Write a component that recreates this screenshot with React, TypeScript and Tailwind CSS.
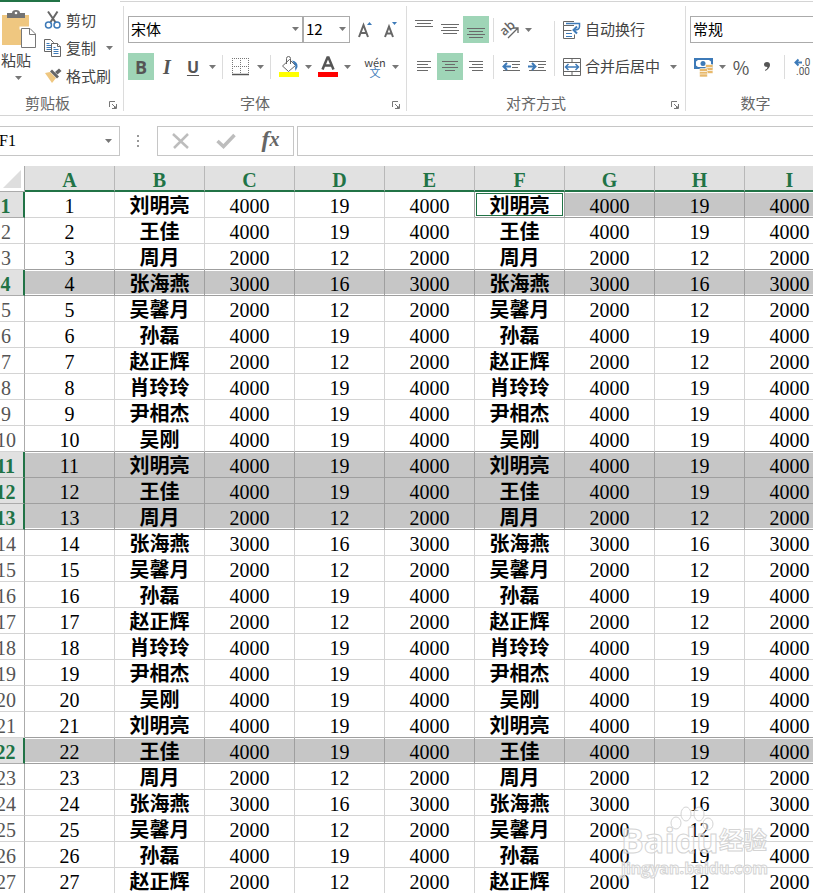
import type { ReactNode } from 'react'
import clsx from 'clsx'

const names = ['刘明亮', '王佳', '周月', '张海燕', '吴馨月', '孙磊', '赵正辉', '肖玲玲', '尹相杰', '吴刚']
const salaries = [4000, 4000, 2000, 3000, 2000, 4000, 2000, 4000, 4000, 4000]
const days = [19, 19, 12, 16, 12, 19, 12, 19, 19, 19]
const columns = ['A', 'B', 'C', 'D', 'E', 'F', 'G', 'H', 'I']
const selectedRows = [4, 11, 12, 13, 22]

const rows = Array.from({ length: 27 }, (_, i) => {
  const k = i % names.length
  return [i + 1, names[k], salaries[k], days[k], salaries[k], names[k], salaries[k], days[k], salaries[k]]
})

function isSelected(row: number, col: number) {
  return selectedRows.includes(row) || (row === 1 && col >= 5)
}

function Arrow() {
  return (
    <svg width="7" height="4" viewBox="0 0 7 4" fill="#777">
      <path d="M0 0h7L3.5 4z" />
    </svg>
  )
}

function Caret({ label }: { label: string }) {
  return (
    <button aria-label={label} className="flex h-full w-3 shrink-0 items-center justify-center">
      <Arrow />
    </button>
  )
}

function Sep() {
  return <div className="mx-1 h-6 w-px shrink-0 bg-[#dcdcdc]" />
}

function Tool({ label, active, className, children }: { label: string; active?: boolean; className: string; children: ReactNode }) {
  return (
    <button aria-label={label} className={clsx('flex h-full shrink-0 items-center justify-center', active && 'bg-[#9fd5b7]', className)}>
      {children}
    </button>
  )
}

// each line is [x, y, width] inside a 26px button
function Lines({ lines }: { lines: number[][] }) {
  return (
    <svg width="26" height="27" viewBox="0 0 26 27" fill="#6a6a6a">
      {lines.map(([x, y, w]) => (
        <rect key={y} x={x} y={y} width={w} height="1" />
      ))}
    </svg>
  )
}

function Launcher({ label }: { label: string }) {
  return (
    <button aria-label={label} className="absolute right-1.5 bottom-0.5">
      <svg width="8" height="8" viewBox="0 0 8 8" fill="none" stroke="#777">
        <path d="M.5 6V.5H6M3 3l3 3" />
        <path d="M7.5 3v4.5H3M5 6.5h2V5" />
      </svg>
    </button>
  )
}

function Group({ title, className, launcher = true, children }: { title: string; className: string; launcher?: boolean; children: ReactNode }) {
  return (
    <section aria-label={title} className={clsx('relative flex h-[105px] shrink-0 flex-col justify-between border-r border-[#dcdcdc]', className)}>
      {children}
      <div className="pr-5 text-center leading-4 text-[#666]">{title}</div>
      {launcher && <Launcher label={title + '设置'} />}
    </section>
  )
}

function Combo({ label, value, className, arrow = true }: { label: string; value: string; className: string; arrow?: boolean }) {
  return (
    <div className={clsx('relative h-[27px] shrink-0', className)}>
      <select aria-label={label} className="h-full w-full appearance-none border border-[#ababab] bg-white px-0.5 text-black">
        <option>{value}</option>
      </select>
      {arrow && (
        <span className="pointer-events-none absolute top-[11px] right-1">
          <Arrow />
        </span>
      )}
    </div>
  )
}

function ClipboardGroup() {
  return (
    <Group title="剪贴板" className="w-[124px] pr-2">
      <div className="flex gap-2 whitespace-nowrap">
        <button className="flex w-9 shrink-0 flex-col items-center pt-1">
          <svg width="36" height="38" viewBox="0 0 36 38">
            <path d="M2 5h27v30H2z" fill="#efc780" />
            <path d="M7 8V3h5q0-3 4-3t4 3h5v5z" fill="#737373" />
            <circle cx="16" cy="3" r="1.3" fill="#fff" />
            <path d="M19.500 16.500h12v3h-12z" fill="#fff" />
            <path d="M21.500 18.500h8.500l5.500 5.500v13.500h-14z" fill="#fff" stroke="#777" />
            <path d="M29.500 18.500v6h6" fill="none" stroke="#777" />
          </svg>
          <span className="-ml-1 leading-6">粘贴</span>
          <span className="pt-1">
            <Arrow />
          </span>
        </button>
        <div className="flex flex-col">
          <button className="flex h-7 items-center gap-1">
            <svg width="18" height="20" viewBox="0 0 18 20" fill="none">
              <path d="M4 1.500 12 13M13.500 1.500 6 13" stroke="#666" strokeWidth="2" />
              <circle cx="4.500" cy="15" r="3" stroke="#3d7ab8" strokeWidth="1.500" />
              <circle cx="13" cy="15" r="3" stroke="#3d7ab8" strokeWidth="1.500" />
            </svg>
            剪切
          </button>
          <div className="flex h-7 items-center">
            <button className="flex items-center gap-1">
              <svg width="18" height="18" viewBox="0 0 18 18" fill="#fff" stroke="#666">
                <path d="M.5.5h6l3 3v9h-9z" />
                <path d="M2.500 4.500h3M2.500 6.500h5M2.500 8.500h5M2.500 10.500h5" stroke="#3d7ab8" />
                <path d="M7.500 4.500h6l3 3v10h-9z" />
                <path d="M13.500 4.500v3h3" />
                <path d="M9.500 8.500h2M9.500 10.500h5M9.500 12.500h5M9.500 14.500h5" stroke="#3d7ab8" />
              </svg>
              复制
            </button>
            <span className="ml-[7px] flex h-6">
              <Caret label="复制选项" />
            </span>
          </div>
          <button className="flex h-7 items-center gap-1">
            <svg width="18" height="16" viewBox="0 0 18 16">
              <path d="m1 5 5-1 6 6-4 5z" fill="#efc780" />
              <path d="m6 3.500 2-2 7 7-2 2z" fill="#666" />
              <path d="m11 4 4-3.500 2.500 2.500-4 3.500z" fill="#666" />
            </svg>
            格式刷
          </button>
        </div>
      </div>
    </Group>
  )
}

function FontGroup() {
  return (
    <Group title="字体" className="w-[283px] px-1 pt-2.5">
      <div className="flex flex-col gap-2.5">
        <div className="flex h-[27px]">
          <Combo label="字体名称" value="宋体" className="w-[175px]" />
          <Combo label="字号" value="12" className="w-[47px]" />
          <Tool label="增大字号" className="ml-0.5 w-[26px]">
            <svg width="16" height="18" viewBox="0 0 16 18">
              <path d="m2 16 4.500-12L11 16M3.500 12h6" fill="none" stroke="#666" strokeWidth="2" />
              <path d="m10 4 2.500-3L15 4z" fill="#3d7ab8" />
            </svg>
          </Tool>
          <Tool label="减小字号" className="w-[26px]">
            <svg width="16" height="18" viewBox="0 0 16 18">
              <path d="m2 16 4-10.500 4 10.500M3.500 12.500h5" fill="none" stroke="#666" strokeWidth="2" />
              <path d="m9 1 2.500 3L14 1z" fill="#3d7ab8" />
            </svg>
          </Tool>
        </div>
        <div className="flex h-[27px] items-center">
          <Tool label="加粗" active className="w-[26px] font-['Open_Sans',sans-serif] text-lg font-bold text-[#555]">B</Tool>
          <Tool label="倾斜" className="w-[26px] font-['Liberation_Serif',serif] text-xl font-bold text-[#555] italic">I</Tool>
          <Tool label="下划线" className="w-[26px] font-['Open_Sans',sans-serif] text-base font-bold text-[#555] underline underline-offset-2">U</Tool>
          <Caret label="下划线选项" />
          <Sep />
          <Tool label="边框" className="w-[27px]">
            <svg width="17" height="18" viewBox="0 0 17 18" fill="none" stroke="#777">
              <path d="M0 .5h17M.5 0v17M8.500 0v17M16.500 0v17M0 8.500h17" strokeDasharray="1 1" />
              <path d="M0 16.500h17" stroke="#555" strokeWidth="1.500" />
            </svg>
          </Tool>
          <Caret label="边框选项" />
          <Sep />
          <Tool label="填充颜色" className="w-[27px]">
            <svg width="20" height="21" viewBox="0 0 20 21">
              <path d="m3.500 10 7-6.500 6 6-7 6z" fill="#fff" stroke="#666" />
              <path d="M7.500 8V2.500q0-2 2-2t2 2V8" fill="none" stroke="#666" />
              <path d="M13 4.500q6 1 5.500 6.500l-2 4q-1-3 0-5z" fill="#3d7ab8" />
              <path d="M0 16h20v5H0z" fill="#ff0" />
            </svg>
          </Tool>
          <Caret label="填充颜色选项" />
          <Tool label="字体颜色" className="w-[27px]">
            <svg width="20" height="21" viewBox="0 0 20 21">
              <path d="m4.500 13.500 5-12h1l5 12M6.500 9.500h7" fill="none" stroke="#555" strokeWidth="2.500" />
              <path d="M0 16h20v5H0z" fill="red" />
            </svg>
          </Tool>
          <Caret label="字体颜色选项" />
          <button aria-label="拼音" className="ml-2 flex w-7 flex-col items-center text-[11px] leading-[10px]">
            <span>wén</span>
            <span className="text-[#3d7ab8]">文</span>
          </button>
          <Caret label="拼音选项" />
        </div>
      </div>
    </Group>
  )
}

function AlignGroup() {
  return (
    <Group title="对齐方式" className="w-[279px] px-1 pt-2.5">
      <div className="flex items-center">
        <div className="flex flex-col gap-2.5">
          <div className="flex h-[27px] items-center">
            <Tool label="顶端对齐" className="w-[26px]">
              <Lines lines={[[4, 4, 18], [6, 7, 14], [4, 10, 18]]} />
            </Tool>
            <Tool label="垂直居中" className="w-[26px]">
              <Lines lines={[[4, 8, 18], [6, 11, 14], [4, 14, 18], [6, 17, 14]]} />
            </Tool>
            <Tool label="底端对齐" active className="w-[26px]">
              <Lines lines={[[4, 12, 18], [6, 15, 14], [4, 18, 18], [6, 21, 14]]} />
            </Tool>
            <Sep />
            <Tool label="方向" className="w-6">
              <svg width="20" height="18" viewBox="0 0 20 18">
                <text x="1" y="13" fontSize="13" fontFamily="Open Sans" fontWeight="600" fill="#666" transform="rotate(-42 6 10)">ab</text>
                <path d="m8 17 9.500-9.500M13 7h5v5" fill="none" stroke="#666" strokeWidth="1.300" />
              </svg>
            </Tool>
            <Caret label="方向选项" />
          </div>
          <div className="flex h-[27px] items-center">
            <Tool label="左对齐" className="w-[26px]">
              <Lines lines={[[6, 8, 14], [6, 11, 11], [6, 14, 14], [6, 17, 11]]} />
            </Tool>
            <Tool label="居中" active className="w-[26px]">
              <Lines lines={[[5, 8, 16], [8, 11, 10], [5, 14, 16], [8, 17, 10]]} />
            </Tool>
            <Tool label="右对齐" className="w-[26px]">
              <Lines lines={[[6, 8, 14], [9, 11, 11], [6, 14, 14], [9, 17, 11]]} />
            </Tool>
            <Sep />
            <Tool label="减少缩进量" className="w-[26px]">
              <svg width="18" height="11" viewBox="0 0 18 11">
                <path d="M1 .5h17M10 3.500h8M10 6.500h6M1 9.500h17" stroke="#6a6a6a" />
                <path d="M9 5.500H1.500M5 2 1.500 5.500 5 9" fill="none" stroke="#3d7ab8" strokeWidth="2" />
              </svg>
            </Tool>
            <Tool label="增加缩进量" className="w-[26px]">
              <svg width="18" height="11" viewBox="0 0 18 11">
                <path d="M1 .5h17M10 3.500h8M10 6.500h6M1 9.500h17" stroke="#6a6a6a" />
                <path d="M0 5.500h7.500M4 2l3.500 3.500L4 9" fill="none" stroke="#3d7ab8" strokeWidth="2" />
              </svg>
            </Tool>
          </div>
        </div>
        <div className="mx-1 h-[55px] w-px shrink-0 bg-[#dcdcdc]" />
        <div className="flex flex-col gap-2.5 pl-1 whitespace-nowrap">
          <button className="flex h-[27px] items-center gap-1">
            <svg width="18" height="18" viewBox="0 0 18 18" fill="none">
              <path d="M11 .5H.5v4H11M.5 4.500v13h11v-4M.5 9.500h8" stroke="#666" />
              <path d="M3 2.500h13.500v3q0 3.500-5 3.500" stroke="#3d7ab8" strokeWidth="1.500" />
              <path d="M14 5.500 10.500 9l3.500 3.500" stroke="#3d7ab8" strokeWidth="2" />
              <path d="M3 12.500h6M3 15.500h6" stroke="#3d7ab8" />
            </svg>
            自动换行
          </button>
          <div className="flex h-[27px] items-center">
            <button className="flex items-center gap-1">
              <svg width="18" height="18" viewBox="0 0 18 18" fill="none">
                <path d="M.5.5h17v17H.5zM.5 4.500h17M.5 13.500h17M9 .5v4M9 13.500v4" stroke="#666" />
                <path d="M2.500 9h13M5.500 6l-3 3 3 3M12.500 6l3 3-3 3" stroke="#3d7ab8" strokeWidth="1.500" />
              </svg>
              合并后居中
            </button>
            <span className="ml-[7px] flex h-full">
              <Caret label="合并选项" />
            </span>
          </div>
        </div>
      </div>
    </Group>
  )
}

function NumberGroup() {
  return (
    <Group title="数字" launcher={false} className="w-40 px-1 pt-2.5">
      <div className="flex flex-col gap-2.5">
        <Combo label="数字格式" value="常规" className="w-full" arrow={false} />
        <div className="flex h-[27px] items-center">
          <Tool label="会计数字格式" className="w-[26px]">
            <svg width="19" height="20" viewBox="0 0 19 20">
              <path d="M0 1h19v11H0z" fill="#3d7ab8" />
              <path d="M2 4.500 4 3h11l2 1.500v4L15 10H4L2 8.500z" fill="#fff" />
              <circle cx="9" cy="6.500" r="2.500" fill="#3d7ab8" />
              <g fill="#e8b96c" stroke="#fff" strokeWidth=".6">
                <rect x="11.500" y="7.500" width="7.500" height="3" rx="1" />
                <rect x="11.500" y="10.500" width="7.500" height="3" rx="1" />
                <rect x="11.500" y="13.500" width="7.500" height="3" rx="1" />
                <rect x="5.500" y="11.500" width="8" height="3" rx="1" />
                <rect x="5.500" y="14.500" width="8" height="3" rx="1" />
                <rect x="5.500" y="17" width="8" height="3" rx="1" />
              </g>
            </svg>
          </Tool>
          <Caret label="会计数字格式选项" />
          <Tool label="百分比样式" className="w-[26px] text-lg text-[#555]">%</Tool>
          <Tool label="千位分隔样式" className="w-[26px]">
            <svg width="6" height="9" viewBox="0 0 6 9" fill="#555">
              <path d="M0 2.500Q0 0 3 0t3 3-4.500 6l-.5-1Q3.500 7 3.500 5 0 5 0 2.500z" />
            </svg>
          </Tool>
          <Sep />
          <Tool label="增加小数位数" className="w-[26px]">
            <svg width="17" height="18" viewBox="0 0 17 18" fontFamily="Roboto" fontSize="10" fill="#555">
              <path d="M8 4.500H2M4.500 1.500l-3 3 3 3" fill="none" stroke="#3d7ab8" strokeWidth="2" />
              <text x="8" y="8">.0</text>
              <text x="2" y="17">.00</text>
            </svg>
          </Tool>
        </div>
      </div>
    </Group>
  )
}

function FormulaBar() {
  return (
    <div className="flex h-[50px] items-center">
      <div className="relative w-[120px] shrink-0">
        <input aria-label="名称框" defaultValue="F1" className="-ml-1 h-[30px] w-[124px] border border-[#c6c6c6] px-0.5 font-['Liberation_Serif',serif] text-base text-black" />
        <span className="pointer-events-none absolute top-[13px] right-2">
          <Arrow />
        </span>
      </div>
      <svg width="37" height="12" viewBox="0 0 37 12" fill="#999" className="shrink-0">
        <path d="M17 0h2v2h-2zM17 5h2v2h-2zM17 10h2v2h-2z" />
      </svg>
      <div className="flex h-[30px] w-[137px] shrink-0 items-center border border-[#c6c6c6]">
        <Tool label="取消" className="w-[45px]">
          <svg width="18" height="16" viewBox="0 0 18 16" fill="none" stroke="#bdbdbd" strokeWidth="2.500">
            <path d="m1 1 15 14M16 1 2 15" />
          </svg>
        </Tool>
        <Tool label="输入" className="w-[45px]">
          <svg width="20" height="16" viewBox="0 0 20 16" fill="none" stroke="#bdbdbd" strokeWidth="3.500">
            <path d="m1.500 8 6 5.500L18.500 2" />
          </svg>
        </Tool>
        <Tool label="插入函数" className="w-[45px] pb-1 font-['Liberation_Serif',serif] text-2xl font-bold text-[#666] italic">
          f<span className="text-xl">x</span>
        </Tool>
      </div>
      <input aria-label="编辑栏" className="ml-[3px] h-[30px] min-w-0 flex-1 border border-r-0 border-[#c6c6c6] px-1" />
    </div>
  )
}

function Sheet() {
  return (
    <table className="-ml-3 w-[847px] table-fixed border-separate border-spacing-0 text-center font-['Liberation_Serif','Noto_Sans_CJK_SC',serif] text-xl text-black">
      <thead>
        <tr className="h-[26px]">
          <th aria-label="全选" className="w-[37px] border-r border-b border-[#ababab] p-0">
            <svg width="18" height="18" viewBox="0 0 18 18" fill="#dedede" className="mr-[3px] ml-auto">
              <path d="M18 0v18H0z" />
            </svg>
          </th>
          {columns.map((c) => (
            <th key={c} scope="col" className="border-r border-b-2 border-r-[#b8b8b8] border-b-[#217346] bg-[#e1e1e1] p-0 pt-1 leading-5 font-bold text-[#217346]">
              {c}
            </th>
          ))}
        </tr>
      </thead>
      <tbody>
        {rows.map((cells, i) => {
          const row = i + 1
          const marked = row === 1 || selectedRows.includes(row)
          return (
            <tr key={row} className="h-[26px]">
              <th
                scope="row"
                className={clsx(
                  'border-b p-0 pt-1 leading-[21px]',
                  marked ? 'border-r-2 border-r-[#217346] border-b-[#ababab] bg-[#e1e1e1] font-bold text-[#217346]' : 'border-r border-r-[#ababab] border-b-[#d4d4d4] font-normal text-[#555]'
                )}
              >
                {row}
              </th>
              {cells.map((value, col) => {
                const on = isSelected(row, col)
                const active = row === 1 && col === 5
                const top = on && !isSelected(row - 1, col)
                const bottom = on && !isSelected(row + 1, col)
                return (
                  <td
                    key={col}
                    className={clsx(
                      'border-r border-b p-0 pt-1 leading-[21px]',
                      on || isSelected(row + 1, col) ? 'border-b-[#9f9f9f]' : 'border-b-[#d4d4d4]',
                      on || isSelected(row, col + 1) ? 'border-r-[#9f9f9f]' : 'border-r-[#d4d4d4]',
                      on && !active && 'bg-[#c6c6c6]',
                      active && 'shadow-[inset_0_0_0_1px_#fff,inset_0_0_0_2px_#217346]',
                      !active && top && bottom && 'shadow-[inset_0_1px_0_#fff,inset_0_-1px_0_#fff]',
                      !active && top && !bottom && 'shadow-[inset_0_1px_0_#fff]',
                      !active && !top && bottom && 'shadow-[inset_0_-1px_0_#fff]',
                      (col === 1 || col === 5) && 'font-bold'
                    )}
                  >
                    {value}
                  </td>
                )
              })}
            </tr>
          )
        })}
      </tbody>
    </table>
  )
}

function Watermark() {
  return (
    <div className="pointer-events-none absolute right-[46px] bottom-4 w-[146px] font-['Open_Sans','Noto_Sans_CJK_SC',sans-serif] font-bold whitespace-nowrap text-white/50 [-webkit-text-stroke:1px_#d4d4d4]">
      <svg width="44" height="30" viewBox="0 0 44 30" fill="#fff" fillOpacity=".6" stroke="#d4d4d4" className="absolute -top-4 left-[49px]">
        <ellipse cx="6" cy="17" rx="5" ry="6" />
        <ellipse cx="16" cy="8" rx="5" ry="7" />
        <ellipse cx="29" cy="8" rx="5" ry="7" />
        <ellipse cx="38" cy="18" rx="5" ry="6" />
      </svg>
      <div className="flex items-center justify-between">
        <span className="text-[34px] leading-9">Baidu</span>
        <span className="text-2xl leading-9">经验</span>
      </div>
      <div className="text-base leading-5">jingyan.baidu.com</div>
    </div>
  )
}

export default function App() {
  return (
    <div className="relative overflow-hidden bg-white font-['Noto_Sans_CJK_SC',sans-serif] text-[15px] text-[#444]">
      {/* bottom edge of the ribbon tabs */}
      <div className="flex h-0.5">
        <div className="w-[60px] bg-[#217346]" />
        <div className="w-[60px]" />
        <div className="flex-1 border-b border-[#d4d4d4]" />
      </div>
      <div className="flex border-b border-[#d4d4d4] py-1">
        <ClipboardGroup />
        <FontGroup />
        <AlignGroup />
        <NumberGroup />
      </div>
      <FormulaBar />
      <Sheet />
      <Watermark />
    </div>
  )
}
